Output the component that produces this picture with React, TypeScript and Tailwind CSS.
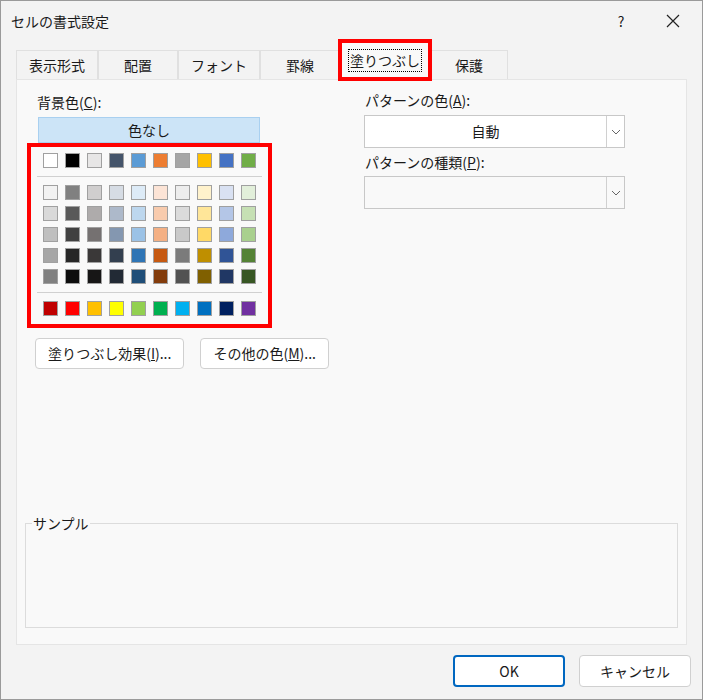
import React from "react";

const base = ["#ffffff","#000000","#e7e6e6","#44546a","#5b9bd5","#ed7d31","#a5a5a5","#ffc000","#4472c4","#70ad47"];
const tints = [
  ["#f2f2f2","#d9d9d9","#bfbfbf","#a6a6a6","#808080"],
  ["#808080","#595959","#404040","#262626","#0d0d0d"],
  ["#d0cece","#aeabab","#757171","#3a3838","#171616"],
  ["#d6dce4","#adb9ca","#8497b0","#333f4f","#222a35"],
  ["#ddebf7","#bdd7ee","#9bc2e6","#2f75b5","#1f4e78"],
  ["#fce4d6","#f8cbad","#f4b084","#c65911","#833c0c"],
  ["#ededed","#dbdbdb","#c9c9c9","#7b7b7b","#525252"],
  ["#fff2cc","#ffe699","#ffd966","#bf8f00","#806000"],
  ["#d9e1f2","#b4c6e7","#8ea9db","#305496","#203764"],
  ["#e2efda","#c6e0b4","#a9d08e","#548235","#375623"],
];
const std = ["#c00000","#ff0000","#ffc000","#ffff00","#92d050","#00b050","#00b0f0","#0070c0","#002060","#7030a0"];

function Row({ colors }: { colors: string[] }) {
  return (
    <div className="flex gap-[7px]">
      {colors.map((c, i) => (
        <div key={i} className="w-[15px] h-[15px] border border-[#a0a0a0]" style={{ background: c }} />
      ))}
    </div>
  );
}

const Chevron = () => (
  <svg width="10" height="6" viewBox="0 0 10 6"><path d="M1 1l4 4 4-4" fill="none" stroke="#666" strokeWidth="1" /></svg>
);

export default function App() {
  const font = { fontFamily: '"Noto Sans CJK JP", "Noto Sans", sans-serif' };
  const tabs = ["表示形式", "配置", "フォント", "罫線", "塗りつぶし", "保護"];
  return (
    <div className="w-[703px] h-[700px] bg-[#f3f3f3] flex flex-col text-[14px] text-[#1a1a1a] border border-[#9a9a9a]" style={font}>
      <div className="h-[40px] flex items-center pl-[10px] shrink-0">
        <div className="flex-1">セルの書式設定</div>
        <div className="w-[46px] text-center">?</div>
        <div className="w-[58px] flex justify-center">
          <svg width="14" height="14" viewBox="0 0 14 14"><path d="M1 1l12 12M13 1L1 13" stroke="#222" strokeWidth="1.2" /></svg>
        </div>
      </div>
      <div className="flex pl-[15px] h-[38px] items-end shrink-0">
        {tabs.map((t, i) => (
          <div key={t} className={`flex items-center justify-center border border-b-0 border-[#e0e0e0] ${i === 4 ? "bg-[#f9f9f9] outline-4 outline-[#ff0000] -outline-offset-2 h-[38px] relative z-10" : "h-[29px] bg-[#f3f3f3]"}`}
            style={{ width: [82, 80, 82, 80, 90, 78][i] }}>
            {i === 4 ? <span className="border border-dotted border-black px-[1px]">{t}</span> : t}
          </div>
        ))}
      </div>
      <div className="mx-[15px] h-[566px] bg-[#f9f9f9] border border-[#e5e5e5] flex flex-col px-[8px]">
        <div className="flex">
          <div className="w-[340px] pl-[12px]">
            <div className="mt-[12px]">背景色(<u>C</u>):</div>
            <div className="w-[222px] h-[26px] mt-[4px] ml-[1px] bg-[#cce4f7] border border-[#a9d0f0] flex items-center justify-center">色なし</div>
            <div className="-ml-[10px] w-[245px] border-4 border-[#ff0000] flex flex-col items-center pt-[6px] pb-[8px]">
              <Row colors={base} />
              <div className="w-[225px] h-px bg-[#d0d0d0] my-[8px]" />
              <div className="flex flex-col gap-[6px]">
                {[0,1,2,3,4].map(r => <Row key={r} colors={tints.map(c => c[r])} />)}
              </div>
              <div className="w-[225px] h-px bg-[#d0d0d0] my-[8px]" />
              <Row colors={std} />
            </div>
            <div className="flex gap-[16px] mt-[10px] -ml-[2px]">
              <div className="h-[31px] px-[12px] bg-white border border-[#d0d0d0] rounded-[4px] flex items-center">塗りつぶし効果(<u>I</u>)...</div>
              <div className="h-[31px] px-[12px] bg-white border border-[#d0d0d0] rounded-[4px] flex items-center">その他の色(<u>M</u>)...</div>
            </div>
          </div>
          <div>
            <div className="mt-[10px]">パターンの色(<u>A</u>):</div>
            <div className="w-[261px] h-[33px] mt-[4px] -ml-[1px] bg-white border border-[#c8c8c8] flex">
              <div className="flex-1 flex items-center justify-center">自動</div>
              <div className="w-[18px] border-l border-[#d0d0d0] flex items-center justify-center"><Chevron /></div>
            </div>
            <div className="mt-[4px]">パターンの種類(<u>P</u>):</div>
            <div className="w-[261px] h-[33px] mt-[3px] -ml-[1px] bg-[#f9f9f9] border border-[#c8c8c8] flex">
              <div className="flex-1" />
              <div className="w-[18px] border-l border-[#d0d0d0] flex items-center justify-center"><Chevron /></div>
            </div>
          </div>
        </div>
        <div className="flex-1" />
        <div className="relative mb-[16px] h-[105px] border border-[#dcdcdc]">
          <div className="absolute -top-[11px] left-[6px] bg-[#f9f9f9] px-[1px]">サンプル</div>
        </div>
      </div>
      <div className="flex justify-end gap-[14px] pr-[11px] mt-[10px]">
        <div className="w-[112px] h-[32px] bg-white border-2 border-[#0067c0] rounded-[4px] flex items-center justify-center">OK</div>
        <div className="w-[112px] h-[32px] bg-white border border-[#d0d0d0] rounded-[4px] flex items-center justify-center">キャンセル</div>
      </div>
    </div>
  );
}
